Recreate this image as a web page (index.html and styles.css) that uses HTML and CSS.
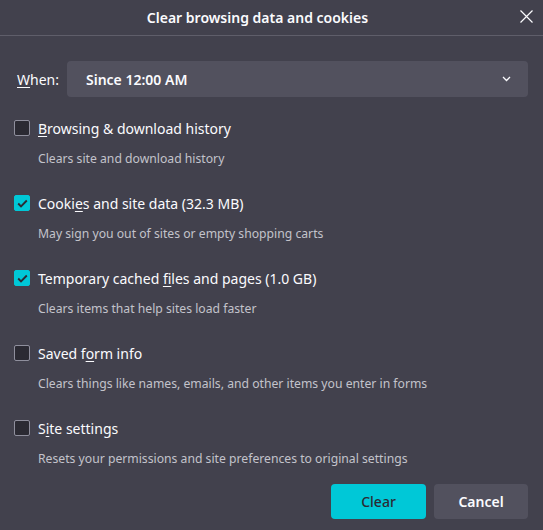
FILE: index.html
```html
<!DOCTYPE html>
<html lang="en">
<head>
  <meta charset="UTF-8">
  <title>Clear browsing data and cookies</title>
  <link rel="stylesheet" href="styles.css">
</head>
<body>
  <div class="dialog">
    <div class="dialog-header">
      <h1>Clear browsing data and cookies</h1>
      <button class="close" aria-label="Close">
        <svg width="13" height="13" viewBox="0 0 13 13"><path d="M0.5 0.5 L12.5 12.5 M12.5 0.5 L0.5 12.5" stroke="#fbfbfe" stroke-width="1.2" fill="none"/></svg>
      </button>
    </div>

    <div class="when-row">
      <label class="when-label"><u>W</u>hen:</label>
      <div class="select">
        <span>Since 12:00 AM</span>
        <svg width="9" height="6" viewBox="0 0 9 6"><path d="M1 1 L4.5 4.5 L8 1" stroke="#fbfbfe" stroke-width="1.3" fill="none"/></svg>
      </div>
    </div>

    <div class="options">
      <div class="option">
        <div class="option-main"><span class="box"></span><span><u>B</u>rowsing &amp; download history</span></div>
        <div class="desc">Clears site and download history</div>
      </div>
      <div class="option">
        <div class="option-main"><span class="box checked"><svg width="11" height="9" viewBox="0 0 11 9"><path d="M1.2 4.5 L4 7.3 L9.8 1.5" stroke="#2b2a33" stroke-width="1.9" fill="none"/></svg></span><span>Cooki<u>e</u>s and site data (32.3 MB)</span></div>
        <div class="desc">May sign you out of sites or empty shopping carts</div>
      </div>
      <div class="option">
        <div class="option-main"><span class="box checked"><svg width="11" height="9" viewBox="0 0 11 9"><path d="M1.2 4.5 L4 7.3 L9.8 1.5" stroke="#2b2a33" stroke-width="1.9" fill="none"/></svg></span><span>Temporary cached <u>f</u>iles and pages (1.0 GB)</span></div>
        <div class="desc">Clears items that help sites load faster</div>
      </div>
      <div class="option">
        <div class="option-main"><span class="box"></span><span>Saved f<u>o</u>rm info</span></div>
        <div class="desc">Clears things like names, emails, and other items you enter in forms</div>
      </div>
      <div class="option">
        <div class="option-main"><span class="box"></span><span>S<u>i</u>te settings</span></div>
        <div class="desc">Resets your permissions and site preferences to original settings</div>
      </div>
    </div>

    <div class="buttons">
      <button class="btn primary">Clear</button>
      <button class="btn">Cancel</button>
    </div>
  </div>
</body>
</html>
```

FILE: styles.css
```css
body {
  margin: 0;
  background-color: #42414d;
  font-family: "Noto Sans", "Open Sans", sans-serif;
  color: #fbfbfe;
}

u {
  text-underline-offset: 2px;
}

.dialog {
  width: 543px;
  height: 530px;
}

.dialog-header {
  height: 36px;
  border-bottom: 1px solid #5f5e6a;
  box-sizing: border-box;
  display: flex;
  align-items: center;
  justify-content: center;
  padding: 0 28px 1px 0;
  position: relative;
}

h1 {
  margin: 0;
  font-size: 14px;
  font-weight: 600;
}

.close {
  position: absolute;
  right: 10px;
  top: 10px;
  background: none;
  border: none;
  padding: 0;
  width: 13px;
  height: 13px;
  display: flex;
}

.when-row {
  display: flex;
  align-items: center;
  margin-top: 25px;
  padding: 0 15px 0 17px;
}

.when-label {
  font-size: 14px;
  width: 50px;
}

.select {
  flex: 1;
  height: 36px;
  background-color: #52515e;
  border-radius: 4px;
  display: flex;
  align-items: center;
  justify-content: space-between;
  padding: 0 17px 0 19px;
  font-size: 14px;
  font-weight: 600;
}

.options {
  margin-top: 20px;
  padding-left: 14px;
}

.option {
  height: 75px;
}

.option:last-child {
  height: 50px;
}

.option-main {
  display: flex;
  align-items: center;
  gap: 8px;
  height: 22px;
  font-size: 14px;
}

.box {
  width: 14px;
  height: 14px;
  border: 1px solid #8f8f9d;
  border-radius: 2px;
  background-color: #2b2a33;
  display: flex;
  align-items: center;
  justify-content: center;
}

.box.checked {
  background-color: #00c8d7;
  border-color: #00c8d7;
}

.desc {
  margin-top: 11px;
  padding-left: 24px;
  font-size: 12.2px;
  color: #c3c3cb;
}

.buttons {
  display: flex;
  justify-content: flex-end;
  gap: 8px;
  padding-right: 15px;
  margin-top: 17px;
}

.btn {
  width: 94px;
  height: 35px;
  border: none;
  border-radius: 4px;
  background-color: #52515e;
  color: #fbfbfe;
  font-family: "Noto Sans", "Open Sans", sans-serif;
  font-size: 14px;
  font-weight: 600;
}

.btn.primary {
  width: 95px;
  background-color: #00c8d7;
  color: #2b2a33;
  font-weight: 500;
}
```
